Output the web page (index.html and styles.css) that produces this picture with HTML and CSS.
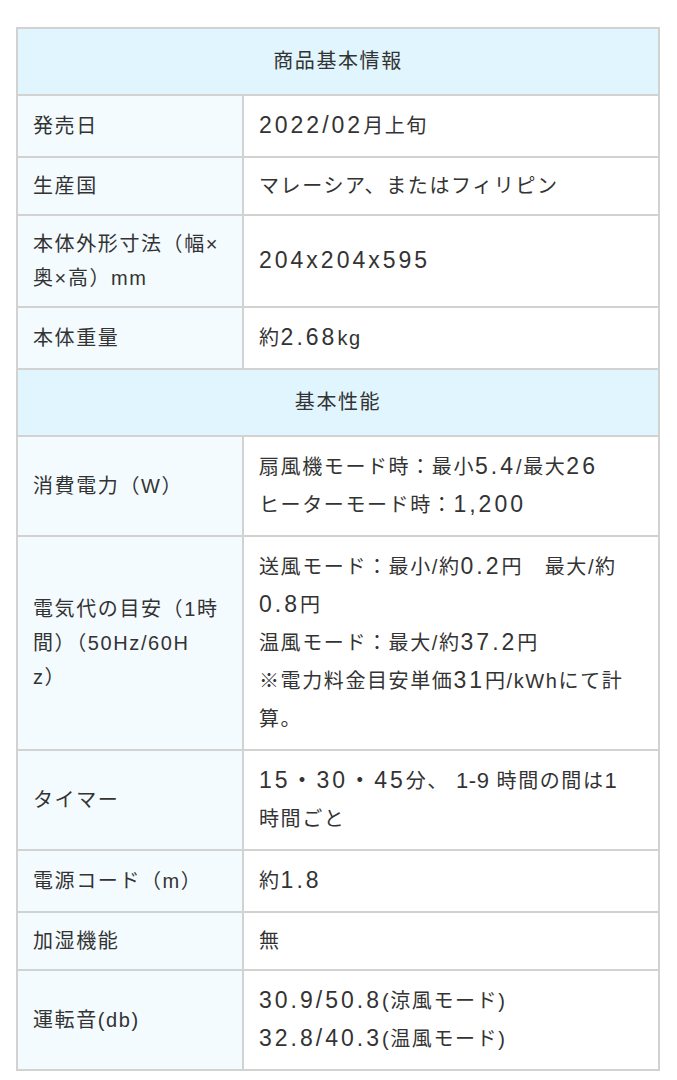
FILE: index.html
```html
<!DOCTYPE html>
<html lang="ja">
<head>
<meta charset="utf-8">
<title>商品基本情報</title>
<link rel="stylesheet" href="styles.css">
</head>
<body>
<table class="spec">
  <colgroup><col class="c-label"><col class="c-value"></colgroup>
  <tbody>
    <tr><th colspan="2" class="sec">商品基本情報</th></tr>
    <tr><td class="lbl">発売日</td><td class="val"><span class="d">2022/02</span>月上旬</td></tr>
    <tr><td class="lbl">生産国</td><td class="val short">マレーシア、またはフィリピン</td></tr>
    <tr><td class="lbl">本体外形寸法（幅×<br>奥×高）mm</td><td class="val"><span class="d">204x204x595</span></td></tr>
    <tr><td class="lbl">本体重量</td><td class="val">約<span class="d">2.68</span>kg</td></tr>
    <tr><th colspan="2" class="sec">基本性能</th></tr>
    <tr><td class="lbl">消費電力（W）</td><td class="val">扇風機モード時：最小<span class="d">5.4</span>/最大<span class="d">26</span><br>ヒーターモード時：<span class="d">1,200</span></td></tr>
    <tr><td class="lbl">電気代の目安（1時<br>間）（50Hz/60H<br>z）</td><td class="val">送風モード：最小/約<span class="d">0.2</span>円　最大/約<br><span class="d">0.8</span>円<br>温風モード：最大/約<span class="d">37.2</span>円<br>※電力料金目安単価<span class="d">31</span>円/kWhにて計<br>算。</td></tr>
    <tr><td class="lbl">タイマー</td><td class="val"><span class="d">15・30・45</span>分、 <span class="n">1-9</span> 時間の間は<span class="n">1</span><br>時間ごと</td></tr>
    <tr><td class="lbl">電源コード（m）</td><td class="val">約<span class="d">1.8</span></td></tr>
    <tr><td class="lbl">加湿機能</td><td class="val short">無</td></tr>
    <tr><td class="lbl">運転音(db)</td><td class="val"><span class="d">30.9/50.8</span>(涼風モード)<br><span class="d">32.8/40.3</span>(温風モード)</td></tr>
  </tbody>
</table>
</body>
</html>
```
FILE: styles.css
```css
html, body {
  margin: 0;
  padding: 0;
  background: #ffffff;
}

body {
  font-family: "Liberation Sans", "Noto Sans CJK JP", sans-serif;
  font-size: 20px;
  color: #333333;
  letter-spacing: 1.6px;
}

.spec {
  border-collapse: collapse;
  width: 644px;
  margin: 27px 0 0 16px;
}

.c-label { width: 226px; }

.spec th,
.spec td {
  border: 2px solid #d2d2d2;
  white-space: nowrap;
  vertical-align: middle;
}

.sec {
  background: #e0f5fd;
  font-weight: normal;
  text-align: center;
  line-height: 35px;
  padding: 15px 15px;
}

.lbl {
  background: #f3fbff;
  text-align: left;
  line-height: 34px;
  padding: 11px 15px;
}

.val {
  background: #ffffff;
  line-height: 38px;
  padding: 11px 15px;
}

.val.short {
  line-height: 34px;
}

.d {
  font-size: 23px;
  letter-spacing: 3px;
  line-height: 0;
}

.n {
  font-size: 22px;
  letter-spacing: 0.5px;
  line-height: 0;
}
```
